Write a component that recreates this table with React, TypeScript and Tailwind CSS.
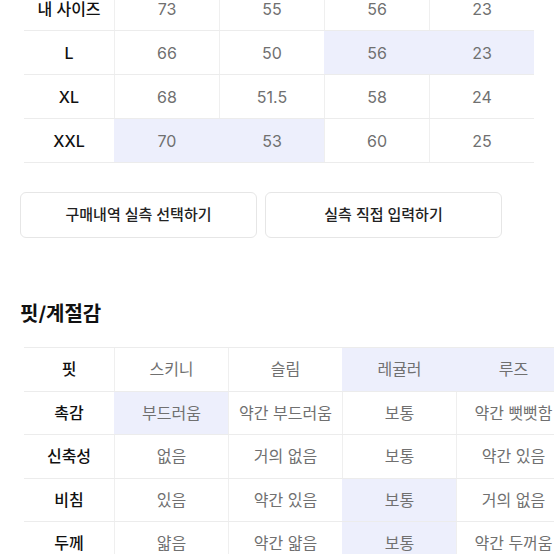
import React from "react";

type Row = { label: string; cells: string[]; hl: number[] };

const sizeRows: Row[] = [
  { label: "내 사이즈", cells: ["73", "55", "56", "23"], hl: [] },
  { label: "L", cells: ["66", "50", "56", "23"], hl: [2, 3] },
  { label: "XL", cells: ["68", "51.5", "58", "24"], hl: [] },
  { label: "XXL", cells: ["70", "53", "60", "25"], hl: [0, 1] },
];

const fitRows: Row[] = [
  { label: "핏", cells: ["스키니", "슬림", "레귤러", "루즈"], hl: [2, 3] },
  { label: "촉감", cells: ["부드러움", "약간 부드러움", "보통", "약간 뻣뻣함"], hl: [0] },
  { label: "신축성", cells: ["없음", "거의 없음", "보통", "약간 있음"], hl: [] },
  { label: "비침", cells: ["있음", "약간 있음", "보통", "거의 없음"], hl: [2] },
  { label: "두께", cells: ["얇음", "약간 얇음", "보통", "약간 두꺼움"], hl: [2] },
];

function Table({
  rows,
  cols,
  rowH,
}: {
  rows: Row[];
  cols: string;
  rowH: string;
}) {
  return (
    <div className="flex flex-col">
      {rows.map((r) => (
        <div key={r.label} className={`grid ${cols} ${rowH} border-b border-[#ececec]`}>
          <div className="flex items-center justify-center font-medium text-[#111]">{r.label}</div>
          {r.cells.map((c, i) => (
            <div
              key={i}
              className={
                r.hl.includes(i)
                  ? "flex items-center justify-center border-l border-transparent bg-[#edeffc] text-[#707070]"
                  : "flex items-center justify-center border-l border-[#efefef] text-[#707070]"
              }
            >
              {c}
            </div>
          ))}
        </div>
      ))}
    </div>
  );
}

export default function App() {
  return (
    <div
      className="h-[554px] w-[554px] overflow-hidden bg-white text-[16px]"
      style={{ fontFamily: '"Inter", "Noto Sans CJK KR", sans-serif' }}
    >
      <div className="-mt-[13px] ml-[24px] w-[510px]">
        <Table rows={sizeRows} cols="grid-cols-[90px_repeat(4,105px)]" rowH="h-[44px]" />
      </div>

      <div className="mt-[29px] flex gap-2 px-5">
        <button className="h-[46px] w-[237px] rounded-md border border-[#e6e6e6] bg-white text-[15px] font-medium text-[#222]">
          구매내역 실측 선택하기
        </button>
        <button className="h-[46px] w-[237px] rounded-md border border-[#e6e6e6] bg-white text-[15px] font-medium text-[#222]">
          실측 직접 입력하기
        </button>
      </div>

      <h2 className="mt-[61px] px-5 text-[20px] font-semibold leading-[30px] text-[#111]">핏/계절감</h2>

      <div className="mt-[18px] ml-[24px] w-[546px] border-t border-[#ececec]">
        <Table rows={fitRows} cols="grid-cols-[90px_repeat(4,114px)]" rowH="h-[43.5px]" />
      </div>
    </div>
  );
}
